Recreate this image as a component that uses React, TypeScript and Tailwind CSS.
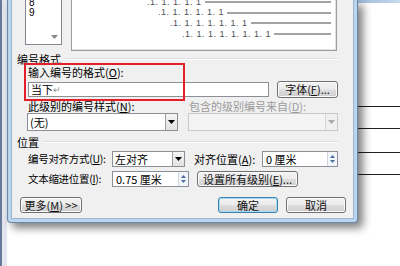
import clsx from 'clsx';
import type { ReactNode } from 'react';

const cjk = "font-['Noto_Sans_CJK_SC',sans-serif]";

function Key({ k }: { k: string }) {
  return <span className="underline underline-offset-1">{k}</span>;
}

function Btn({ children, className, primary }: { children: ReactNode; className?: string; primary?: boolean }) {
  return (
    <div
      className={clsx(
        'flex items-center justify-center whitespace-nowrap rounded-[3px] border bg-[linear-gradient(#f3f3f3,#ebebeb_48%,#dddddd_52%,#cfcfcf)] text-[11px] leading-none text-[#111]',
        primary
          ? 'border-[#3c7fb1] shadow-[inset_0_0_0_1px_#a8dcf3]'
          : 'border-[#707070] shadow-[inset_0_0_0_1px_#fbfbfb]',
        className
      )}
    >
      {children}
    </div>
  );
}

function DownArrow({ color = '#000' }: { color?: string }) {
  return (
    <svg width="7" height="4" viewBox="0 0 7 4" aria-hidden="true">
      <path d="M0 0h7L3.5 4z" fill={color} />
    </svg>
  );
}

function Combo({ text, className, disabled }: { text?: string; className?: string; disabled?: boolean }) {
  return (
    <div
      className={clsx(
        'flex items-stretch border',
        disabled ? 'border-[#c9c9c9] bg-[#f4f4f4]' : 'border-[#8a8f98] bg-white',
        className
      )}
    >
      <div className="flex flex-1 items-center whitespace-nowrap pl-[2px] text-[11px] leading-none">{text}</div>
      <div
        className={clsx(
          'flex w-[12px] items-center justify-center border-l',
          disabled
            ? 'border-[#d6d6d6] bg-[#f0f0f0]'
            : 'border-[#a0a0a0] bg-[linear-gradient(#f4f4f4,#e2e2e2)]'
        )}
      >
        <DownArrow color={disabled ? '#a8a8a8' : '#000'} />
      </div>
    </div>
  );
}

function Spin({ text, className }: { text: string; className?: string }) {
  return (
    <div className={clsx('flex items-stretch border border-[#8a8f98] bg-white', className)}>
      <div className="flex flex-1 items-center whitespace-nowrap pl-[3px] text-[11px] leading-none">{text}</div>
      <div className="flex w-[10px] flex-col items-center justify-center gap-[2px] border-l border-[#d0d7e0] bg-[#f2f5f9]">
        <svg width="5" height="3" viewBox="0 0 5 3" aria-hidden="true">
          <path d="M0 3h5L2.5 0z" fill="#4a6ea0" />
        </svg>
        <svg width="5" height="3" viewBox="0 0 5 3" aria-hidden="true">
          <path d="M0 0h5L2.5 3z" fill="#4a6ea0" />
        </svg>
      </div>
    </div>
  );
}

function GroupTitle({ title }: { title: string }) {
  return (
    <div className="flex h-[12px] items-center pl-[5px] pr-[15px]">
      <span className="whitespace-nowrap text-[11px] leading-none">{title}</span>
      <div className="ml-[4px] h-[2px] flex-1 border-t border-b border-t-[#d5dfe5] border-b-white" />
    </div>
  );
}

const previewRows = [
  { pad: 'pl-[75px]', text: '.1. 1. 1. 1. 1' },
  { pad: 'pl-[86px]', text: '.1. 1. 1. 1. 1. 1' },
  { pad: 'pl-[98px]', text: '.1. 1. 1. 1. 1. 1. 1' },
  { pad: 'pl-[110px]', text: '.1. 1. 1. 1. 1. 1. 1. 1' },
];

export default function App() {
  return (
    <div className={clsx('flex h-[266px] w-[400px] overflow-hidden bg-white text-black', cjk)}>
      <div className="w-[7px] shrink-0 border-l-2 border-[#66799a] bg-[#e3e6ec]" />

      <div className="relative z-10 h-[223px] w-[351px] shrink-0 rounded-b-[4px] border border-t-0 border-[#6a87ad] bg-[#bcd5ee] px-[3px] pb-[3px] shadow-[5px_5px_9px_rgba(0,0,0,0.5)]">
        <div className="relative flex h-[219px] flex-col border border-t-0 border-[#9db6d3] bg-[#f0f0f0]">
          <div className="flex h-[51px] gap-[9px] pl-[13px]">
            <div className="flex h-[45px] w-[37px] flex-col border border-t-0 border-[#828790] bg-white pl-[3px] text-[10px] leading-[10px]">
              <div className="-mt-[2px] font-['Liberation_Sans',sans-serif]">8</div>
              <div className="font-['Liberation_Sans',sans-serif]">9</div>
              <div className="mt-auto mb-[5px] mr-[3px] self-end">
                <DownArrow color="#8a8a8a" />
              </div>
            </div>
            <div className="flex w-[266px] flex-col border border-t-0 border-[#9c9c9c] bg-white shadow-[inset_-1px_-1px_0_#e2e2e2]">
              <div className="-mt-[3px] flex flex-col">
                {previewRows.map((r, i) => (
                  <div key={i} className={clsx('flex h-[10.6px] items-center pr-[5px]', r.pad)}>
                    <span className="whitespace-pre font-['Liberation_Sans',sans-serif] text-[9px] leading-none tracking-[0.5px] text-[#4a505b]">
                      {r.text}
                    </span>
                    <div className="ml-[3px] h-[2px] flex-1 bg-[#a3a3a3]" />
                  </div>
                ))}
              </div>
            </div>
          </div>

          <div className="mt-[2px]">
            <GroupTitle title="编号格式" />
          </div>

          <div className="mt-[1px] flex h-[12px] items-center whitespace-nowrap pl-[16px] text-[11px] leading-none">
            输入编号的格式(<Key k="O" />):
          </div>

          <div className="mt-[3px] flex h-[17px] items-center gap-[8px] pl-[16px]">
            <div className="flex h-[15px] w-[241px] items-center border border-[#8a8f98] bg-white pl-[2px] text-[11px] leading-none">
              当下<span className="text-[9px] text-[#8a8a8a]">↵</span>
            </div>
            <Btn className="h-[17px] w-[61px]">
              字体(<Key k="F" />)...
            </Btn>
          </div>

          <div className="mt-[2px] flex h-[12px] items-center whitespace-nowrap text-[11px] leading-none">
            <span className="w-[177px] shrink-0 pl-[16px]">
              此级别的编号样式(<Key k="N" />):
            </span>
            <span className="text-[#9a9a9a]">
              包含的级别编号来自(<Key k="D" />):
            </span>
          </div>

          <div className="mt-[1px] flex h-[18px] gap-[10px] pl-[15px]">
            <Combo text="(无)" className="w-[151px]" />
            <Combo disabled className="w-[150px]" />
          </div>

          <div className="mt-[5px]">
            <GroupTitle title="位置" />
          </div>

          <div className="mt-[3px] flex h-[16px] items-center whitespace-nowrap pl-[16px] text-[11px] leading-none">
            <span className="w-[84px] shrink-0 text-[10.5px] tracking-[-0.3px]">
              编号对齐方式(<Key k="U" />):
            </span>
            <Combo text="左对齐" className="h-[16px] w-[73px] shrink-0" />
            <span className="ml-[9px] w-[68px] shrink-0">
              对齐位置(<Key k="A" />):
            </span>
            <Spin text="0 厘米" className="h-[16px] w-[76px] shrink-0" />
          </div>

          <div className="mt-[4px] flex h-[16px] items-center whitespace-nowrap pl-[16px] text-[11px] leading-none">
            <span className="w-[84px] shrink-0 text-[10.5px] tracking-[-0.3px]">
              文本缩进位置(<Key k="I" />):
            </span>
            <Spin text="0.75 厘米" className="h-[16px] w-[77px] shrink-0" />
            <Btn className="ml-[8px] h-[16px] w-[101px] shrink-0">
              设置所有级别(<Key k="E" />)...
            </Btn>
          </div>

          <div className="mt-[10px] flex h-[16px] items-center pl-[8px]">
            <Btn className="h-[16px] w-[62px]">
              更多(<Key k="M" />) &gt;&gt;
            </Btn>
            <Btn primary className="ml-[136px] h-[16px] w-[60px]">
              确定
            </Btn>
            <Btn className="ml-[8px] h-[16px] w-[60px]">取消</Btn>
          </div>

          <div className="absolute left-[12px] top-[63px] h-[38px] w-[161px] border-2 border-[#e3202a]" />
        </div>
      </div>

      <div className="flex flex-1 flex-col">
        <div className="h-[3px] bg-[linear-gradient(90deg,#9fbbdb,#c7daee)]" />
        <div className="mt-[103px] h-px bg-[#222]" />
        <div className="mt-[21px] h-px bg-[#222]" />
        <div className="mt-[23px] h-px bg-[#222]" />
        <div className="mt-[21px] h-px bg-[#222]" />
      </div>
    </div>
  );
}
